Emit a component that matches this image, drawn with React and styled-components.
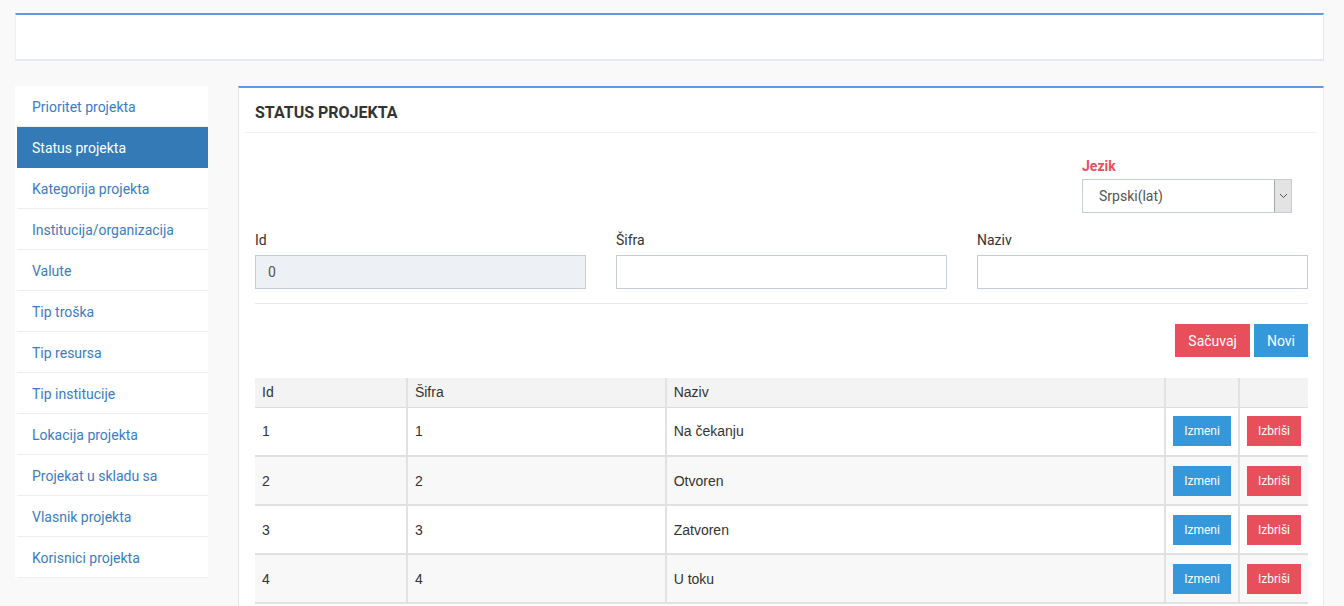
import React from 'react';
import styled, { createGlobalStyle } from 'styled-components';

const GlobalStyle = createGlobalStyle`
  html, body {
    margin: 0;
    padding: 0;
    background: #f9f9f9;
    font-family: Roboto, "Liberation Sans", sans-serif;
    color: #333;
  }
  * { box-sizing: border-box; }
`;

const Page = styled.div`
  padding: 13px 20px 0 15px;
  height: 606px;
  overflow: hidden;
`;

const TopBar = styled.div`
  height: 48px;
  background: #fff;
  border-top: 2px solid #6699dd;
  border-right: 1px solid #e3e6ea;
  border-left: 1px solid #eef0f3;
  border-bottom: 2px solid #e6e9ee;
`;

const Content = styled.div`
  display: flex;
  align-items: flex-start;
  margin-top: 25px;
  gap: 30px;
`;

const Sidebar = styled.nav`
  width: 193px;
  flex-shrink: 0;
  background: #fff;
  display: flex;
  flex-direction: column;
`;

const NavItem = styled.a`
  display: block;
  height: 41px;
  line-height: 42px;
  padding-left: 15px;
  margin-left: 2px;
  font-size: 14px;
  color: ${p => (p.$active ? '#fff' : '#3a7cc4')};
  background: ${p => (p.$active ? '#337ab7' : '#fff')};
  border-bottom: 1px solid ${p => (p.$active ? '#337ab7' : '#eeeeee')};
  text-decoration: none;
`;

const Panel = styled.section`
  flex: 1;
  background: #fff;
  border-top: 2px solid #5b9be0;
  border-left: 1px solid #e6e6e6;
  border-right: 1px solid #ececec;
  min-height: 540px;
`;

const PanelHeader = styled.div`
  margin: 0 6px;
  height: 45px;
  padding-left: 10px;
  display: flex;
  align-items: center;
  border-bottom: 1px solid #eef0f3;
`;

const PanelTitle = styled.h3`
  margin: 5px 0 0;
  font-size: 16px;
  font-weight: 700;
  color: #333;
`;

const PanelBody = styled.div`
  padding: 0 15px 0 16px;
`;

const LangRow = styled.div`
  display: flex;
  justify-content: flex-end;
  padding: 25px 16px 0 0;
`;

const LangGroup = styled.div`
  width: 210px;
  display: flex;
  flex-direction: column;
`;

const LangLabel = styled.label`
  font-size: 14px;
  font-weight: 700;
  color: #e8505f;
  height: 21px;
  line-height: 17px;
`;

const SelectBox = styled.div`
  height: 34px;
  border: 1px solid #c5ccd6;
  display: flex;
  align-items: stretch;
  background: #fff;
`;

const SelectText = styled.span`
  flex: 1;
  padding-left: 16px;
  display: flex;
  align-items: center;
  font-size: 14px;
  color: #555;
`;

const SelectArrow = styled.span`
  width: 17px;
  background: #e3e3e3;
  border-left: 1px solid #aaa;
  display: flex;
  align-items: center;
  justify-content: center;
`;

const FormGrid = styled.div`
  display: grid;
  grid-template-columns: repeat(3, 1fr);
  gap: 30px;
  margin-top: 18px;
  padding-bottom: 14px;
  border-bottom: 1px solid #e8e8e8;
`;

const Field = styled.div`
  display: flex;
  flex-direction: column;
`;

const FieldLabel = styled.label`
  font-size: 14px;
  color: #333;
  height: 24px;
  line-height: 18px;
`;

const Input = styled.div`
  height: 34px;
  border: 1px solid #c5ccd6;
  background: ${p => (p.$disabled ? '#edf0f5' : '#fff')};
  padding-left: 12px;
  display: flex;
  align-items: center;
  font-size: 14px;
  color: #555;
`;

const Actions = styled.div`
  display: flex;
  justify-content: flex-end;
  gap: 4px;
  margin-top: 20px;
`;

const Button = styled.button`
  border: none;
  font-family: Roboto, sans-serif;
  color: #fff;
  background: ${p => (p.$variant === 'danger' ? '#e74f5b' : '#3498db')};
  font-size: ${p => (p.$small ? '12px' : '14px')};
  height: ${p => (p.$small ? '30px' : '33px')};
  padding: 0 ${p => (p.$small ? '11px' : '13px')};
  cursor: pointer;
`;

const Table = styled.table`
  width: 100%;
  margin-top: 21px;
  border-collapse: collapse;
  font-family: "Liberation Sans", Arial, sans-serif;
  font-size: 14px;
  color: #333;
`;

const Th = styled.th`
  background: #f3f3f3;
  height: 29px;
  text-align: left;
  font-weight: 400;
  padding: 0 7px;
  border-left: ${p => (p.$first ? 'none' : '2px solid #e2e2e2')};
  border-bottom: 1px solid #dddddd;
  width: ${p => p.$w || 'auto'};
`;

const Tr = styled.tr`
  background: ${p => (p.$striped ? '#f8f8f8' : '#fff')};
`;

const Td = styled.td`
  height: 49px;
  padding: 0 7px;
  border-left: ${p => (p.$first ? 'none' : '2px solid #e2e2e2')};
  border-bottom: 2px solid #e0e0e0;
`;

const menu = [
  'Prioritet projekta',
  'Status projekta',
  'Kategorija projekta',
  'Institucija/organizacija',
  'Valute',
  'Tip troška',
  'Tip resursa',
  'Tip institucije',
  'Lokacija projekta',
  'Projekat u skladu sa',
  'Vlasnik projekta',
  'Korisnici projekta',
];

const rows = [
  { id: 1, sifra: 1, naziv: 'Na čekanju' },
  { id: 2, sifra: 2, naziv: 'Otvoren' },
  { id: 3, sifra: 3, naziv: 'Zatvoren' },
  { id: 4, sifra: 4, naziv: 'U toku' },
];

export default function App() {
  return (
    <Page>
      <GlobalStyle />
      <TopBar />
      <Content>
        <Sidebar>
          {menu.map((item, i) => (
            <NavItem key={item} href="#" $active={i === 1}>
              {item}
            </NavItem>
          ))}
        </Sidebar>
        <Panel>
          <PanelHeader>
            <PanelTitle>STATUS PROJEKTA</PanelTitle>
          </PanelHeader>
          <PanelBody>
            <LangRow>
              <LangGroup>
                <LangLabel>Jezik</LangLabel>
                <SelectBox>
                  <SelectText>Srpski(lat)</SelectText>
                  <SelectArrow>
                    <svg width="9" height="6" viewBox="0 0 9 6">
                      <path d="M1 1l3.5 3.5L8 1" fill="none" stroke="#555" strokeWidth="1" />
                    </svg>
                  </SelectArrow>
                </SelectBox>
              </LangGroup>
            </LangRow>
            <FormGrid>
              <Field>
                <FieldLabel>Id</FieldLabel>
                <Input $disabled>0</Input>
              </Field>
              <Field>
                <FieldLabel>Šifra</FieldLabel>
                <Input />
              </Field>
              <Field>
                <FieldLabel>Naziv</FieldLabel>
                <Input />
              </Field>
            </FormGrid>
            <Actions>
              <Button $variant="danger">Sačuvaj</Button>
              <Button>Novi</Button>
            </Actions>
            <Table>
              <thead>
                <tr>
                  <Th $first $w="152px">Id</Th>
                  <Th $w="259px">Šifra</Th>
                  <Th $w="500px">Naziv</Th>
                  <Th $w="73px" />
                  <Th />
                </tr>
              </thead>
              <tbody>
                {rows.map((r, i) => (
                  <Tr key={r.id} $striped={i % 2 === 1}>
                    <Td $first>{r.id}</Td>
                    <Td>{r.sifra}</Td>
                    <Td>{r.naziv}</Td>
                    <Td>
                      <Button $small>Izmeni</Button>
                    </Td>
                    <Td>
                      <Button $small $variant="danger">Izbriši</Button>
                    </Td>
                  </Tr>
                ))}
              </tbody>
            </Table>
          </PanelBody>
        </Panel>
      </Content>
    </Page>
  );
}
